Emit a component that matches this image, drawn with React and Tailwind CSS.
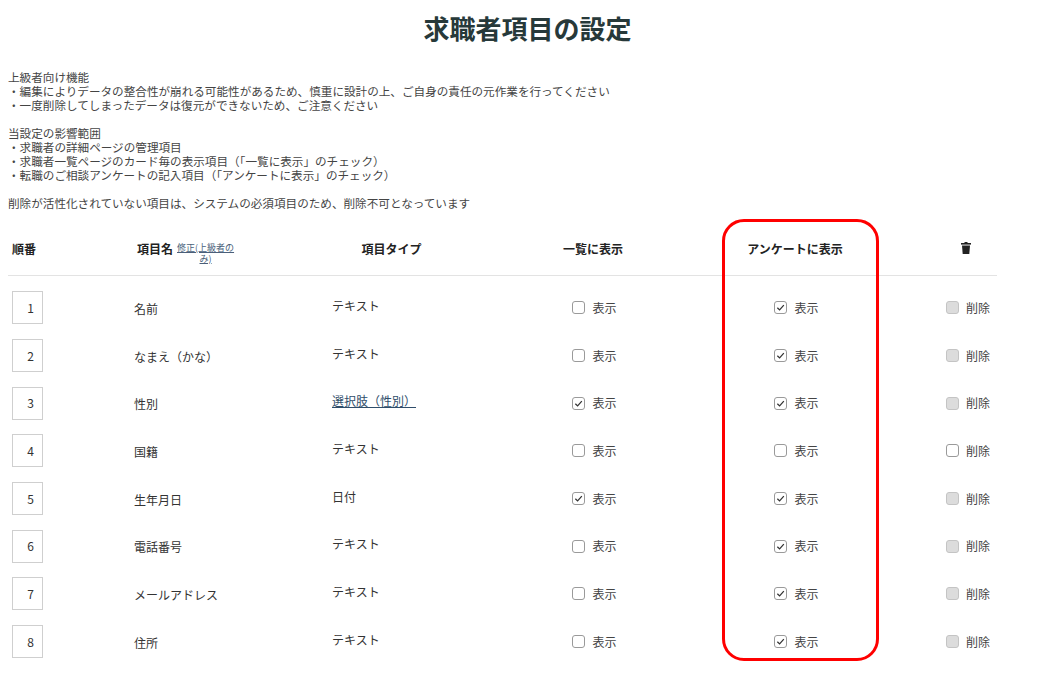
import React from 'react'

const rows = [
  { no: 1, name: '名前', type: 'テキスト', list: false, survey: true, del: true },
  { no: 2, name: 'なまえ（かな）', type: 'テキスト', list: false, survey: true, del: true },
  { no: 3, name: '性別', type: '選択肢（性別）', link: true, list: true, survey: true, del: true },
  { no: 4, name: '国籍', type: 'テキスト', list: false, survey: false, del: false },
  { no: 5, name: '生年月日', type: '日付', list: true, survey: true, del: true },
  { no: 6, name: '電話番号', type: 'テキスト', list: false, survey: true, del: true },
  { no: 7, name: 'メールアドレス', type: 'テキスト', list: false, survey: true, del: true },
  { no: 8, name: '住所', type: 'テキスト', list: false, survey: true, del: true },
]

function Box({ checked, disabled }) {
  return (
    <span className={`w-[13px] h-[13px] rounded-[3px] border flex items-center justify-center ${disabled ? 'bg-[#dcdcdc] border-[#c4c4c4]' : 'bg-white border-[#9a9a9a]'}`}>
      {checked && (
        <svg width="9" height="9" viewBox="0 0 10 10"><path d="M1.5 5.2 L4 7.6 L8.7 2.3" fill="none" stroke="#333" strokeWidth="1.4" /></svg>
      )}
    </span>
  )
}

function Check({ checked, disabled, label }) {
  return (
    <span className="flex items-center gap-[7px] text-[12px] text-[#444]">
      <Box checked={checked} disabled={disabled} />
      {label}
    </span>
  )
}

export default function App() {
  return (
    <div className="relative w-[1055px] h-[677px] bg-white overflow-hidden text-[#333]" style={{ fontFamily: '"Noto Sans CJK JP", "Noto Sans", sans-serif' }}>
      <h1 className="text-center text-[26px] font-bold text-[#27393a] pt-[8px] leading-[40px]">求職者項目の設定</h1>

      <div className="pl-[8px] pt-[22px] text-[11.6px] leading-[14px] text-[#444]">
        <p>上級者向け機能</p>
        <p>・編集によりデータの整合性が崩れる可能性があるため、慎重に設計の上、ご自身の責任の元作業を行ってください</p>
        <p>・一度削除してしまったデータは復元ができないため、ご注意ください</p>
        <p className="mt-[14px]">当設定の影響範囲</p>
        <p>・求職者の詳細ページの管理項目</p>
        <p>・求職者一覧ページのカード毎の表示項目（「一覧に表示」のチェック）</p>
        <p>・転職のご相談アンケートの記入項目（「アンケートに表示」のチェック）</p>
        <p className="mt-[14px]">削除が活性化されていない項目は、システムの必須項目のため、削除不可となっています</p>
      </div>

      <div className="ml-[8px] w-[989px] mt-[20px]">
        <div className="grid grid-cols-[120px_190px_147px_256px_148px_128px] h-[46px] border-b border-[#e3e3e3] text-[12px] font-bold text-[#222] pt-[10px]">
          <div className="pl-[4px]">順番</div>
          <div className="pl-[9px] flex items-start gap-[4px]">
            <span>項目名</span>
            <span className="text-[9px] font-normal text-[#4a5f7a] underline leading-[11px] text-center mt-[2px]">修正(上級者の<br />み)</span>
          </div>
          <div className="text-center">項目タイプ</div>
          <div className="text-center">一覧に表示</div>
          <div className="text-center">アンケートに表示</div>
          <div className="flex justify-end pr-[26px] pt-[2px]">
            <svg width="10" height="12" viewBox="0 0 10 12"><rect x="0" y="1" width="10" height="1.6" fill="#222" /><rect x="3.5" y="0" width="3" height="1.5" fill="#222" /><path d="M1 3.4 H9 L8.3 12 H1.7 Z" fill="#222" /></svg>
          </div>
        </div>
        <div className="pt-[8px]">
          {rows.map(r => (
            <div key={r.no} className="grid grid-cols-[120px_190px_147px_256px_148px_128px] h-[47.7px] items-center text-[12px] text-[#333]">
              <div className="pl-[4px]">
                <div className="w-[31px] h-[33px] border border-[#cfcfcf] flex items-center justify-end pr-[8px] text-[12px]">{r.no}</div>
              </div>
              <div className="pl-[6px] pt-[2px]">{r.name}</div>
              <div className="pl-[14px] pb-[4px]">
                {r.link ? <span className="underline text-[#2f4d6a]">{r.type}</span> : r.type}
              </div>
              <div className="flex justify-center pl-[3px]"><Check checked={r.list} label="表示" /></div>
              <div className="flex justify-center pl-[3px]"><Check checked={r.survey} label="表示" /></div>
              <div className="flex justify-end pr-[7px]"><Check disabled={r.del} label="削除" /></div>
            </div>
          ))}
        </div>
      </div>

      <div className="absolute left-[722px] top-[219px] w-[157px] h-[442px] border-[3px] border-[#ff0000] rounded-[22px] pointer-events-none" />
    </div>
  )
}
